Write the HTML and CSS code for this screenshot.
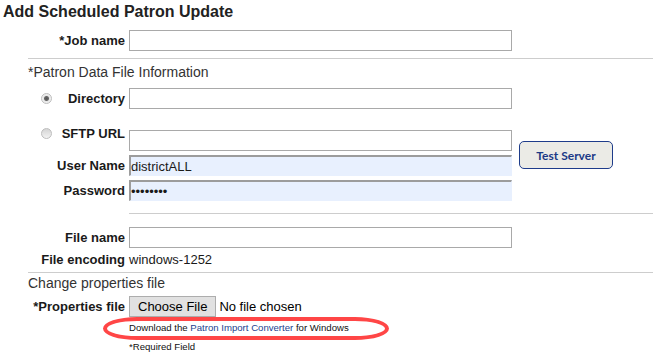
FILE: index.html
```html
<!DOCTYPE html>
<html lang="en">
<head>
    <meta charset="UTF-8">
    <meta name="viewport" content="width=device-width, initial-scale=1.0">
    <title>Add Scheduled Patron Update</title>
    <link rel="stylesheet" href="styles.css">
</head>
<body>
    <h1 class="page-title">Add Scheduled Patron Update</h1>
    <form class="update-form" id="patronUpdateForm">
        <div class="field-row job-row">
            <label class="field-label" for="job_name">*Job name</label>
            <input class="text-input" type="text" id="job_name" name="job_name">
        </div>

        <hr class="divider">
        <div class="section-title">*Patron Data File Information</div>

        <div class="field-row directory-row">
            <label class="field-label radio-label">
                <input class="radio" type="radio" name="source" value="directory" checked>
                <span>Directory</span>
            </label>
            <input class="text-input" type="text" id="directory" name="directory">
        </div>

        <div class="sftp-group">
            <label class="field-label radio-label sftp-label">
                <input class="radio" type="radio" name="source" value="sftp">
                <span>SFTP URL</span>
            </label>
            <input class="text-input" type="text" id="sftp_url" name="sftp_url">
            <button class="test-btn" type="button">Test Server</button>

            <label class="field-label" for="user_name">User Name</label>
            <input class="text-input autofilled" type="text" id="user_name" name="user_name" value="districtALL">

            <label class="field-label" for="password">Password</label>
            <input class="text-input autofilled" type="password" id="password" name="password" value="password">
        </div>

        <hr class="divider inner-divider">

        <div class="field-row file-row">
            <label class="field-label" for="file_name">File name</label>
            <input class="text-input" type="text" id="file_name" name="file_name">
        </div>
        <div class="field-row encoding-row">
            <span class="field-label">File encoding</span>
            <span class="field-value">windows-1252</span>
        </div>

        <hr class="divider encoding-divider">
        <div class="section-title props-title">Change properties file</div>

        <div class="field-row props-row">
            <span class="field-label">*Properties file</span>
            <div class="file-picker">
                <button class="choose-btn" type="button">Choose File</button>
                <span class="file-status">No file chosen</span>
            </div>
        </div>

        <div class="note-row download-row">
            <span class="note converter-note">Download the <a href="#">Patron Import Converter</a> for Windows</span>
        </div>
        <div class="note-row required-row">
            <span class="note">*Required Field</span>
        </div>
    </form>
</body>
</html>
```

FILE: styles.css
```css
body {
    margin: 0;
    font-family: "Liberation Sans", Arial, sans-serif;
    font-size: 13px;
    color: #1a1a1a;
    background-color: #ffffff;
}
.page-title {
    margin: 3px 0 0 3px;
    font-size: 16px;
    line-height: 18px;
    font-weight: bold;
    color: #222;
}
.update-form {
    width: 653px;
}
.field-row {
    display: grid;
    grid-template-columns: 125px 383px;
    column-gap: 4px;
    align-items: center;
}
.field-label {
    font-weight: bold;
    text-align: right;
    line-height: 15px;
}
.radio-label {
    display: flex;
    align-items: center;
    justify-content: space-between;
    padding-left: 41px;
}
.radio {
    appearance: none;
    -webkit-appearance: none;
    width: 11px;
    height: 11px;
    margin: 0;
    border: 1px solid #bdbdbd;
    border-radius: 50%;
    background: linear-gradient(#d4d4d4, #f3f3f3);
    box-sizing: border-box;
}
.radio:checked {
    background: radial-gradient(circle, #555 0, #666 2px, #e6e6e6 3px, #f6f6f6 5px);
}
.text-input {
    box-sizing: border-box;
    width: 383px;
    height: 21px;
    margin: 0;
    padding: 1px 2px;
    border: 1px solid #a9a9a9;
    font: 13px "Liberation Sans", Arial, sans-serif;
    color: #1a1a1a;
    background-color: #ffffff;
}
.text-input.autofilled {
    background-color: #e8f0fe;
    border-top: 2px solid #9c9c9c;
    border-left: 2px solid #9c9c9c;
    border-right: 1px solid #e8f0fe;
    border-bottom: 1px solid #e8f0fe;
    padding: 0;
}
.divider {
    border: 0;
    height: 1px;
    background-color: #cdcdcd;
    margin: 7px 0 0 28px;
}
.section-title {
    margin: 5px 0 0 28px;
    font-size: 14px;
    line-height: 16px;
    color: #333;
}
.job-row {
    margin-top: 9px;
}
.directory-row {
    margin-top: 8px;
}
.sftp-group {
    display: grid;
    grid-template-columns: 125px 383px auto;
    column-gap: 4px;
    row-gap: 4px;
    align-items: center;
    margin-top: 21px;
}
.sftp-label {
    align-self: start;
    margin-top: -4px;
}
.test-btn {
    grid-column: 3;
    grid-row: 1 / 3;
    align-self: center;
    justify-self: start;
    margin: 4px 0 0 3px;
    width: 94px;
    height: 28px;
    padding: 0;
    border: 1px solid #1e3c8a;
    border-radius: 5px;
    background-color: #ebebe6;
    color: #1b3a86;
    font-family: Lato, "Open Sans", sans-serif;
    font-size: 12px;
    font-weight: bold;
    cursor: pointer;
}
.inner-divider {
    margin: 12px 0 0 129px;
}
.file-row {
    margin-top: 13px;
}
.encoding-row {
    margin-top: 4px;
}
.field-value {
    line-height: 15px;
}
.encoding-divider {
    margin-top: 5px;
}
.props-title {
    margin-top: 2px;
}
.props-row {
    margin-top: 5px;
}
.file-picker {
    display: flex;
    align-items: center;
    gap: 3px;
}
.choose-btn {
    height: 21px;
    padding: 0 8px;
    border: 1px solid #adadad;
    background-color: #e1e1e1;
    color: #000;
    font: 13px "Liberation Sans", Arial, sans-serif;
}
.file-status {
    line-height: 15px;
    color: #000;
}
.note-row {
    display: flex;
    margin-left: 129px;
    font-size: 9.6px;
    line-height: 12px;
}
.note {
    display: block;
    color: #111;
}
.converter-note {
    position: relative;
}
.converter-note::before {
    content: "";
    position: absolute;
    left: -26px;
    top: -5px;
    width: 286px;
    height: 23px;
    box-sizing: border-box;
    border: 4px solid #ff4646;
    border-radius: 34px / 11.5px;
}
.converter-note a {
    color: #1c3f8f;
    text-decoration: none;
}
.download-row {
    margin-top: 5px;
}
.required-row {
    margin-top: 7px;
}
```
